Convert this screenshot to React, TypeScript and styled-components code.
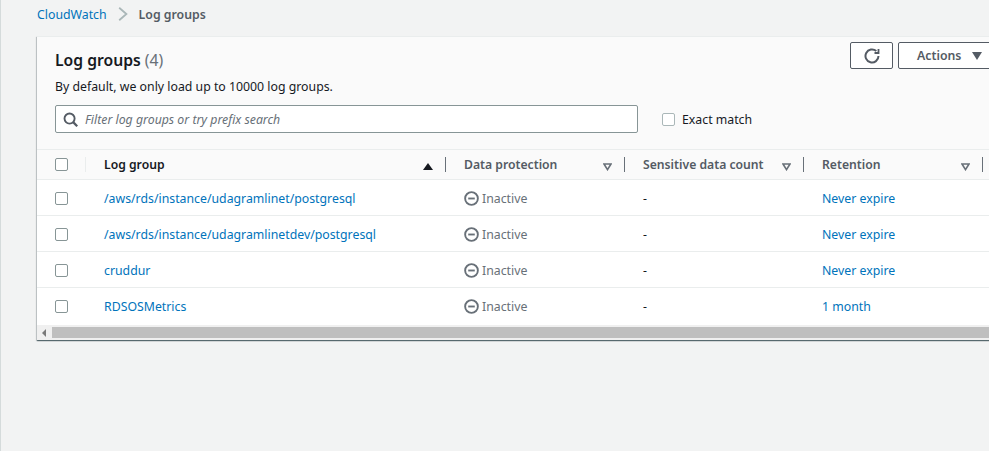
import styled, { createGlobalStyle } from 'styled-components'

const GlobalStyle = createGlobalStyle`
  html, body {
    margin: 0;
    padding: 0;
    height: 100%;
    overflow: hidden;
    background: #f2f3f3;
  }
  #root {
    height: 100%;
  }
`

const rows = [
  { name: '/aws/rds/instance/udagramlinet/postgresql', retention: 'Never expire' },
  { name: '/aws/rds/instance/udagramlinetdev/postgresql', retention: 'Never expire' },
  { name: 'cruddur', retention: 'Never expire' },
  { name: 'RDSOSMetrics', retention: '1 month' },
]

const SearchIcon = () => (
  <svg width="15" height="15" viewBox="0 0 16 16" fill="none" stroke="#545b64" strokeWidth="2">
    <circle cx="7" cy="7" r="5.4" />
    <path d="M10.8 10.8 15.2 15.2" strokeWidth="2.4" />
  </svg>
)

const RefreshIcon = () => (
  <svg width="16" height="16" viewBox="0 0 16 16" fill="none" stroke="#545b64" strokeWidth="2">
    <path d="M14.5 8a6.5 6.5 0 1 1-2.2-4.9" />
    <path d="M14.5 1v4h-4" strokeWidth="1.8" />
  </svg>
)

const InactiveIcon = () => (
  <svg width="15" height="15" viewBox="0 0 16 16" fill="none" stroke="#687078" strokeWidth="2">
    <circle cx="8" cy="8" r="6.8" />
    <path d="M4.5 8h7" />
  </svg>
)

const FilterCaret = () => (
  <FilterCaretSvg width="9" height="8" viewBox="0 0 9 8" fill="none" stroke="#687078" strokeWidth="1.6">
    <path d="M1 1h7L4.5 6.6z" />
  </FilterCaretSvg>
)

const SortCaret = () => (
  <SortCaretSvg width="10" height="7" viewBox="0 0 10 7" fill="#16191f">
    <path d="M0 7 5 0l5 7z" />
  </SortCaretSvg>
)

const ChevronIcon = () => (
  <svg width="10" height="14" viewBox="0 0 10 14" fill="none" stroke="#aab7b8" strokeWidth="1.8">
    <path d="M1.2 0.8 8.4 7l-7.2 6.2" />
  </svg>
)

export default function App() {
  return (
    <Page>
      <GlobalStyle />
      <Breadcrumbs>
        <CrumbLink>CloudWatch</CrumbLink>
        <ChevronIcon />
        <CrumbCurrent>Log groups</CrumbCurrent>
      </Breadcrumbs>
      <Card>
        <CardHeader>
          <TitleRow>
            <Title>
              Log groups <Count>(4)</Count>
            </Title>
            <Actions>
              <IconButton>
                <RefreshIcon />
              </IconButton>
              <ActionsButton>
                Actions
                <ActionsCaret />
              </ActionsButton>
            </Actions>
          </TitleRow>
          <Description>By default, we only load up to 10000 log groups.</Description>
          <FilterRow>
            <FilterBox>
              <SearchIcon />
              <FilterText>Filter log groups or try prefix search</FilterText>
            </FilterBox>
            <ExactMatch>
              <Checkbox $light />
              Exact match
            </ExactMatch>
          </FilterRow>
        </CardHeader>
        <HeadRow>
          <HeadCheckCell>
            <Checkbox />
          </HeadCheckCell>
          <HeadCell $active>
            Log group
            <SortCaret />
          </HeadCell>
          <HeadCell>
            Data protection
            <FilterCaret />
          </HeadCell>
          <HeadCell>
            Sensitive data count
            <FilterCaret />
          </HeadCell>
          <HeadCell>
            Retention
            <FilterCaret />
          </HeadCell>
        </HeadRow>
        {rows.map((row) => (
          <Row key={row.name}>
            <CheckCell>
              <Checkbox />
            </CheckCell>
            <Cell>
              <Link>{row.name}</Link>
            </Cell>
            <Cell>
              <Status>
                <InactiveIcon />
                Inactive
              </Status>
            </Cell>
            <Cell>-</Cell>
            <Cell>
              <Link>{row.retention}</Link>
            </Cell>
          </Row>
        ))}
        <Scrollbar>
          <ScrollArrow />
          <ScrollThumb />
        </Scrollbar>
      </Card>
    </Page>
  )
}

const Page = styled.div`
  box-sizing: border-box;
  width: 100%;
  height: 100%;
  padding-left: 37px;
  border-left: 1px solid #d5dbdb;
  overflow: hidden;
  font-family: 'Noto Sans', 'Liberation Sans', sans-serif;
  font-size: 12.3px;
  color: #16191f;
`

const Breadcrumbs = styled.nav`
  display: flex;
  align-items: center;
  gap: 11px;
  height: 36px;
  margin-left: -1px;
  padding-bottom: 8px;
  box-sizing: border-box;
`

const CrumbLink = styled.a`
  color: #0073bb;
`

const CrumbCurrent = styled.span`
  color: #545b64;
  font-weight: 600;
`

const Card = styled.section`
  width: 1000px;
  margin-left: -1px;
  background: #fff;
  box-shadow: 0 1px 1px 0 rgba(0, 28, 36, 0.5), 1px 1px 1px 0 rgba(0, 28, 36, 0.15),
    -1px 1px 1px 0 rgba(0, 28, 36, 0.15);
  border-top: 1px solid #eaeded;
`

const CardHeader = styled.div`
  box-sizing: border-box;
  height: 113px;
  padding: 5px 0 0 18px;
  background: #fafafa;
  border-bottom: 1px solid #eaeded;
`

const TitleRow = styled.div`
  display: flex;
  justify-content: space-between;
  height: 29px;
`

const Title = styled.h1`
  margin: 0;
  padding-top: 4px;
  font-size: 15.7px;
  line-height: 28px;
  font-weight: 600;
`

const Count = styled.span`
  color: #687078;
  font-weight: 400;
`

const Actions = styled.div`
  display: flex;
  gap: 5px;
  width: 187px;
`

const IconButton = styled.button`
  display: flex;
  align-items: center;
  justify-content: center;
  box-sizing: border-box;
  width: 43px;
  height: 27px;
  padding: 0;
  background: #fff;
  border: 1px solid #545b64;
  border-radius: 2px;
`

const ActionsButton = styled.button`
  display: flex;
  align-items: center;
  gap: 11px;
  box-sizing: border-box;
  width: 101px;
  height: 27px;
  padding: 0 0 0 18px;
  background: #fff;
  border: 1px solid #545b64;
  border-radius: 2px;
  color: #545b64;
  font: 600 12.3px 'Noto Sans', 'Liberation Sans', sans-serif;
`

const ActionsCaret = styled.span`
  width: 0;
  height: 0;
  border-left: 5.5px solid transparent;
  border-right: 5.5px solid transparent;
  border-top: 8px solid #545b64;
`

const Description = styled.p`
  margin: 6px 0 0;
  line-height: 20px;
  font-size: 12.3px;
`

const FilterRow = styled.div`
  display: flex;
  align-items: center;
  margin-top: 8px;
`

const FilterBox = styled.div`
  display: flex;
  align-items: center;
  gap: 7px;
  box-sizing: border-box;
  width: 583px;
  height: 28px;
  padding-left: 7px;
  background: #fff;
  border: 1px solid #879596;
  border-radius: 2px;
`

const FilterText = styled.span`
  color: #687078;
  font-style: italic;
  font-size: 12.3px;
`

const ExactMatch = styled.label`
  display: flex;
  align-items: center;
  gap: 7px;
  margin-left: 24px;
`

const Checkbox = styled.span<{ $light?: boolean }>`
  display: block;
  box-sizing: border-box;
  width: 13px;
  height: 13px;
  background: #fff;
  border: 1px solid ${(p) => (p.$light ? '#aab7b8' : '#879596')};
  border-radius: 2px;
`

const gridColumns = `49px 360px 179px 179px 179px 1fr`

const HeadRow = styled.div`
  display: grid;
  grid-template-columns: ${gridColumns};
  height: 30px;
  background: #fafafa;
  border-bottom: 1px solid #eaeded;
  box-sizing: border-box;
`

const HeadCell = styled.div<{ $active?: boolean }>`
  display: flex;
  align-items: center;
  justify-content: space-between;
  position: relative;
  box-sizing: border-box;
  padding: 0 13px 0 18px;
  font-weight: 600;
  font-size: 12.2px;
  color: ${(p) => (p.$active ? '#16191f' : '#545b64')};
  &::after {
    content: '';
    position: absolute;
    right: 0;
    top: 7px;
    height: 15px;
    width: 1px;
    background: #687078;
  }
`

const FilterCaretSvg = styled.svg`
  margin-top: 4px;
`

const SortCaretSvg = styled.svg`
  margin-top: 3px;
`

const Row = styled.div`
  display: grid;
  grid-template-columns: ${gridColumns};
  height: 36px;
  box-sizing: border-box;
  border-bottom: 1px solid #eaeded;
  background: #fff;
  padding-top: 1px;
  &:nth-last-child(2) {
    border-bottom-color: #fff;
  }
`

const CheckCell = styled.div`
  display: flex;
  align-items: center;
  padding-left: 18px;
`

const HeadCheckCell = styled(CheckCell)`
  position: relative;
  &::after {
    content: '';
    position: absolute;
    right: 0;
    top: 7px;
    height: 15px;
    width: 1px;
    background: #eaeded;
  }
`

const Cell = styled.div`
  display: flex;
  align-items: center;
  padding-left: 18px;
  white-space: nowrap;
`

const Link = styled.a`
  color: #0073bb;
`

const Status = styled.span`
  display: flex;
  align-items: center;
  gap: 3px;
  color: #687078;
`

const Scrollbar = styled.div`
  display: flex;
  align-items: stretch;
  height: 16px;
  padding-top: 2px;
  background: #f0f0f0;
  border-top: 1px solid #fff;
  box-sizing: border-box;
`

const ScrollArrow = styled.span`
  width: 0;
  height: 0;
  align-self: center;
  margin: 0 6px 2px 5px;
  border-top: 4px solid transparent;
  border-bottom: 4px solid transparent;
  border-right: 4px solid #7a7a7a;
`

const ScrollThumb = styled.span`
  flex: 1;
  background: #bfbfbf;
  margin-bottom: 2px;
`
